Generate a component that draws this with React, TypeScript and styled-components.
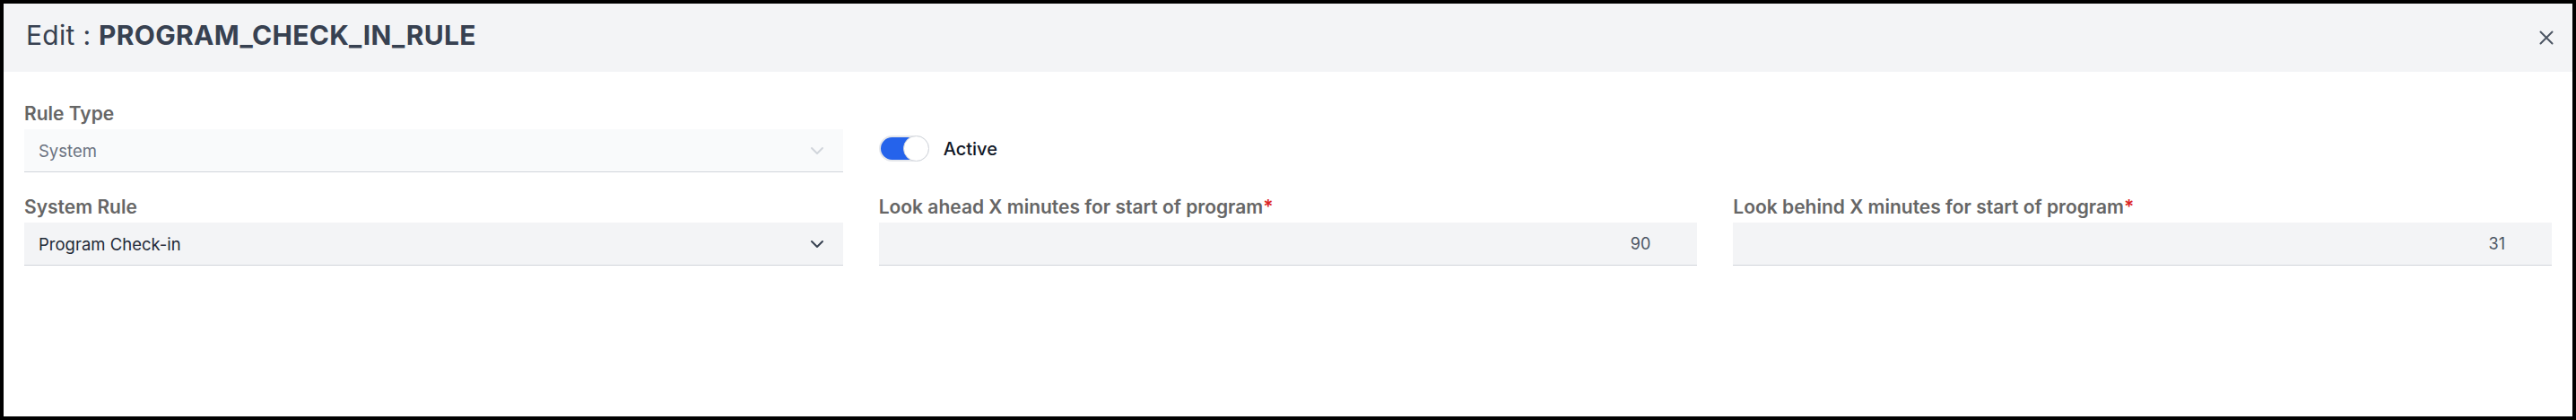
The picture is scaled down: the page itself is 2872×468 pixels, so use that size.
import React from "react";
import styled, { createGlobalStyle } from "styled-components";

const COLOR = {
  HEADER_BG: "#f3f4f6",
  TITLE: "#374151",
  LABEL: "#666666",
  FIELD_BG: "#f3f4f6",
  FIELD_BG_DISABLED: "#f9fafb",
  FIELD_LINE: "#d1d5db",
  TEXT: "#1f2937",
  TEXT_MUTED: "#6b7280",
  BLUE: "#2563eb",
  RED: "#dc2626",
};

const GlobalStyle = createGlobalStyle`
  html, body {
    margin: 0;
    padding: 0;
    background: #ffffff;
  }

  body {
    font-family: Inter, "Noto Sans", sans-serif;
  }

  * {
    box-sizing: border-box;
  }
`;

const Frame = styled.div`
  width: 2872px;
  height: 468px;
  border: 4px solid #000000;
  background: #ffffff;
  display: flex;
  flex-direction: column;
`;

const Header = styled.div`
  height: 76px;
  padding: 0 21px 6px 25px;
  background: ${COLOR.HEADER_BG};

  display: flex;
  align-items: center;
  justify-content: space-between;
`;

const Title = styled.h1`
  margin: 0;
  font-size: 30px;
  font-weight: 400;
  letter-spacing: 0.3px;
  color: ${COLOR.TITLE};
  line-height: normal;

  b {
    font-weight: 700;
  }
`;

const CloseButton = styled.button`
  width: 16px;
  height: 16px;
  margin-top: 6px;
  padding: 0;
  border: none;
  background: transparent;
  color: #4b5563;
  display: flex;
  cursor: pointer;
`;

const Body = styled.div`
  padding: 35px 23px 0 23px;

  display: grid;
  grid-template-columns: repeat(3, 1fr);
  column-gap: 40px;
  row-gap: 27px;
`;

const Field = styled.div`
  display: flex;
  flex-direction: column;
  gap: 5px;
`;

const Label = styled.label`
  font-size: 21px;
  font-weight: 600;
  line-height: 24px;
  color: ${COLOR.LABEL};
`;

const Required = styled.span`
  color: ${COLOR.RED};
`;

const Select = styled.div<{ disabled?: boolean }>`
  height: 48px;
  padding: 0 17px 0 16px;
  background: ${(props) => (props.disabled ? COLOR.FIELD_BG_DISABLED : COLOR.FIELD_BG)};
  border-bottom: 1px solid ${COLOR.FIELD_LINE};

  display: flex;
  align-items: center;
  justify-content: space-between;

  font-size: 18.5px;
  color: ${(props) => (props.disabled ? COLOR.TEXT_MUTED : COLOR.TEXT)};
`;

const Chevron = styled.svg<{ disabled?: boolean }>`
  width: 24px;
  height: 24px;
  color: ${(props) => (props.disabled ? "#d1d5db" : "#374151")};
`;

const NumberInput = styled.div`
  height: 48px;
  padding: 0 52px 0 16px;
  background: ${COLOR.FIELD_BG};
  border-bottom: 1px solid ${COLOR.FIELD_LINE};

  display: flex;
  align-items: center;
  justify-content: flex-end;

  font-size: 18px;
  color: #4b5563;
`;

const ToggleRow = styled.div`
  padding-top: 24px;
  display: flex;
  align-items: center;
  gap: 16px;
`;

const Track = styled.div<{ on: boolean }>`
  position: relative;
  width: 56px;
  height: 29px;
  border-radius: 999px;
  border: 2px solid #e5e7eb;
  background: ${(props) => (props.on ? COLOR.BLUE : "#e5e7eb")};
`;

const Knob = styled.span<{ on: boolean }>`
  position: absolute;
  top: -2px;
  ${(props) => (props.on ? "right: -2px;" : "left: -2px;")}
  width: 29px;
  height: 29px;
  border-radius: 50%;
  background: #ffffff;
  border: 1px solid #d1d5db;
`;

const ToggleText = styled.span`
  font-size: 20px;
  font-weight: 500;
  color: #111827;
`;

const ChevronDown = ({ disabled }: { disabled?: boolean }) => (
  <Chevron disabled={disabled} viewBox="0 0 24 24" fill="none" stroke="currentColor" strokeWidth="2" strokeLinecap="round" strokeLinejoin="round">
    <path d="m6 9 6 6 6-6" />
  </Chevron>
);

const App = (): JSX.Element => {
  return (
    <>
      <GlobalStyle />
      <Frame>
        <Header>
          <Title>
            Edit : <b>PROGRAM_CHECK_IN_RULE</b>
          </Title>
          <CloseButton aria-label="Close">
            <svg width="16" height="16" viewBox="0 0 16 16" fill="none" stroke="currentColor" strokeWidth="2" strokeLinecap="round">
              <path d="M1.5 1.5 14.5 14.5M14.5 1.5 1.5 14.5" />
            </svg>
          </CloseButton>
        </Header>
        <Body>
          <Field>
            <Label>Rule Type</Label>
            <Select disabled>
              <span>System</span>
              <ChevronDown disabled />
            </Select>
          </Field>
          <ToggleRow>
            <Track on>
              <Knob on />
            </Track>
            <ToggleText>Active</ToggleText>
          </ToggleRow>
          <div />
          <Field>
            <Label>System Rule</Label>
            <Select>
              <span>Program Check-in</span>
              <ChevronDown />
            </Select>
          </Field>
          <Field>
            <Label>
              Look ahead X minutes for start of program<Required>*</Required>
            </Label>
            <NumberInput>90</NumberInput>
          </Field>
          <Field>
            <Label>
              Look behind X minutes for start of program<Required>*</Required>
            </Label>
            <NumberInput>31</NumberInput>
          </Field>
        </Body>
      </Frame>
    </>
  );
};

export default App;
